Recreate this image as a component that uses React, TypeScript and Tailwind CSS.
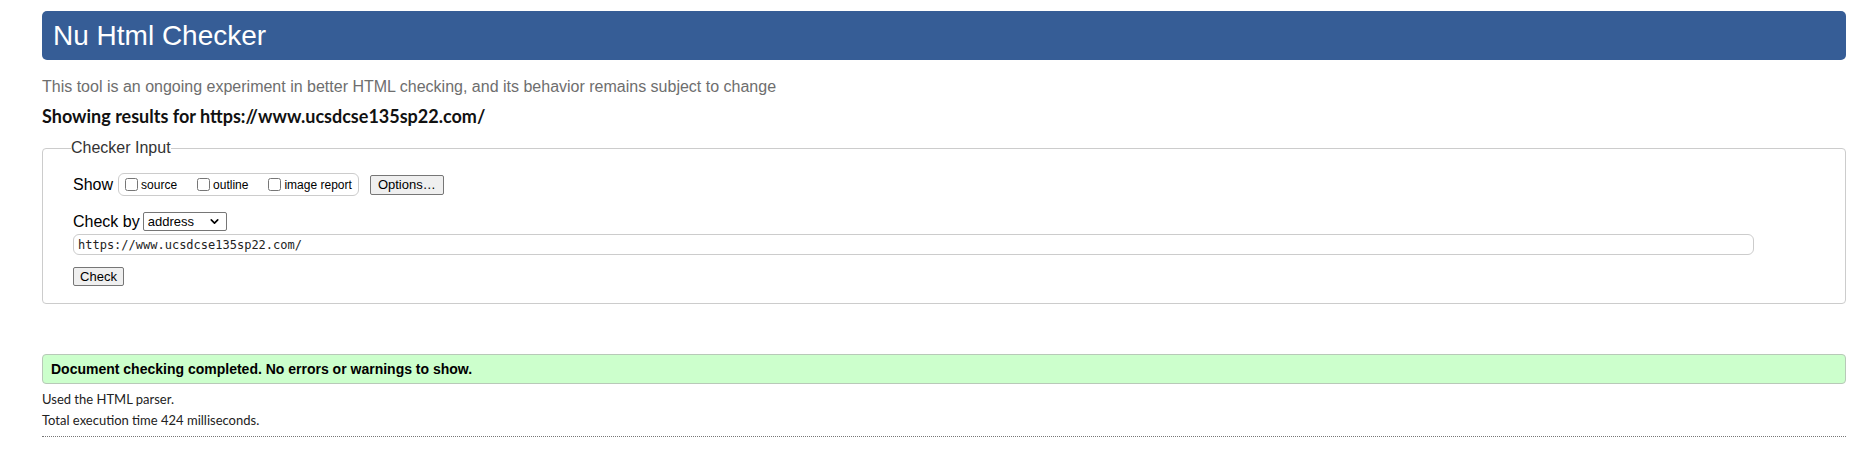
import { ChevronDown } from "lucide-react";

export default function App() {
  const shows = ["source", "outline", "image report"];

  return (
    <div className="min-h-screen bg-white pt-[11px] pl-[42px] pr-[15px] font-['Liberation_Sans',Arial,sans-serif] text-black">
      {/* Title bar */}
      <header className="flex h-[49px] items-center rounded-[5px] bg-[#365d96] pl-[11px]">
        <h1 className="text-[28px] font-normal text-white">Nu Html Checker</h1>
      </header>

      <p className="mt-[18px] text-[16px] leading-[18px] text-[#6e6e6e]">
        This tool is an ongoing experiment in better HTML checking, and its behavior remains subject to change
      </p>

      <p className="mt-[9px] font-['Lato',sans-serif] text-[18px] font-bold leading-[22px] text-[#111]">
        Showing results for https://www.ucsdcse135sp22.com/
      </p>

      {/* Checker input form */}
      <fieldset className="mt-[12px] rounded-[4px] border border-[#cccccc] pt-[16px] pr-[20px] pb-[17px] pl-[30px]">
        <legend className="-ml-[2px] px-0 text-[16px] leading-[18px] text-[#333]">Checker Input</legend>

        <div className="flex h-[23px] items-center">
          <span className="text-[16px] leading-[18px]">Show</span>
          <div className="ml-[5px] flex h-[23px] shrink-0 items-center whitespace-nowrap rounded-[6px] border border-[#cccccc] pr-[6px] text-[12px]">
            {shows.map((s, i) => (
              <label key={s} className={`flex shrink-0 items-center ${i > 0 ? "ml-[14px]" : ""}`}>
                <input type="checkbox" className="mt-[3px] mr-[3px] mb-[3px] ml-[6px] h-[13px] w-[13px] shrink-0" />
                <span>{s}</span>
              </label>
            ))}
          </div>
          <button className="ml-[11px] h-[20px] w-[74px] shrink-0 rounded-[2px] border border-[#767676] bg-[#efefef] text-[13px] leading-[16px]">
            Options…
          </button>
        </div>

        <div className="mt-[16px] flex h-[19px] items-center">
          <span className="text-[16px] leading-[18px]">Check by</span>
          <div className="ml-[3px] flex h-[19px] w-[84px] items-center justify-between rounded-[2px] border border-[#767676] bg-white pr-[5px] pl-[4px] text-[13px]">
            <span>address</span>
            <ChevronDown className="h-[13px] w-[13px]" strokeWidth={3} />
          </div>
        </div>

        <input
          readOnly
          defaultValue="https://www.ucsdcse135sp22.com/"
          className="mt-[3px] block h-[21px] w-[1681px] rounded-[6px] border border-[#cccccc] pl-[4px] font-['DejaVu_Sans_Mono',monospace] text-[12px] text-[#222] outline-none"
        />

        <button className="mt-[12px] block h-[19px] w-[51px] rounded-[2px] border border-[#767676] bg-[#efefef] text-[13px] leading-[16px]">
          Check
        </button>
      </fieldset>

      {/* Result */}
      <div className="mt-[50px] flex h-[30px] items-center rounded-[4px] border border-[#b8c9b8] bg-[#ccffcc] pl-[8px]">
        <p className="text-[14px] font-bold">Document checking completed. No errors or warnings to show.</p>
      </div>

      <div className="font-['Lato',sans-serif] text-[13px] text-[#222]">
        <p className="mt-[5px] leading-[21px]">Used the HTML parser.</p>
        <p className="leading-[21px]">Total execution time 424 milliseconds.</p>
      </div>
      <div className="mt-[5px] border-t border-dotted border-[#777]" />
    </div>
  );
}
